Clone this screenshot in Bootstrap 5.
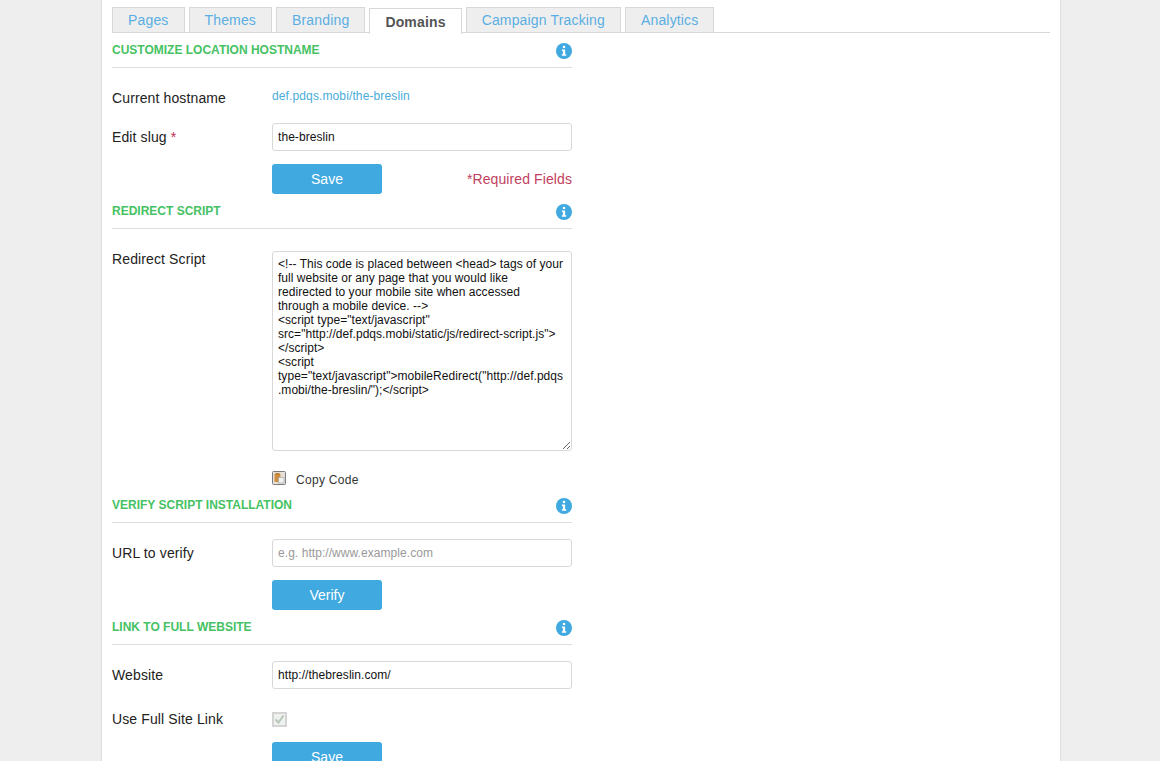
<!DOCTYPE html>
<html lang="en">
<head>
<meta charset="utf-8">
<title>Domains</title>
<link rel="stylesheet" href="https://cdn.jsdelivr.net/npm/bootstrap@5.3.0/dist/css/bootstrap.min.css">
<style>
html,body{height:761px;overflow:hidden}
body{background:#eee;font-family:"Liberation Sans",Arial,sans-serif;font-size:14px;color:#222}
.sheet{width:960px;height:761px;margin-left:101px;background:#fff;border:1px solid #ddd;border-width:0 1px;padding:7px 10px 0}
.tabbar{gap:4px;border-bottom:1px solid #d8d8d8;height:26px;flex-wrap:nowrap}
.tabbar .nav-link{height:25px;padding:0 15px;line-height:25px;font-size:14px;letter-spacing:.16px;color:#5aaee3;background:#eee;border:1px solid #d8d8d8;border-bottom:0;border-radius:0;margin:0}
.tabbar .nav-link.active{height:26px;padding-top:1px;margin-top:1px;font-weight:700;color:#555;background:#fff;border-color:#d8d8d8}
.formcol{width:460px}
.headbar{height:35px;border-bottom:1px solid #ddd;padding-top:10px}
.headbar h2{font-size:12px;line-height:15px;font-weight:700;color:#46c263;text-transform:uppercase;margin:0}
.tipicon{width:16px;height:16px;margin-top:0;display:block}
.fieldname{width:160px;flex:none;font-size:14px;letter-spacing:.12px;color:#222}
.fieldbody{width:300px}
.req{color:#c7254e}
.textbox.form-control{height:28px;padding:0 5px;font-size:12px;line-height:26px;letter-spacing:.06px;border:1px solid #d8d8d8;border-radius:3px;color:#111;background:#fff;box-shadow:none}
.textbox.form-control::placeholder{color:#999}
.codebox.form-control{height:200px;padding:5px;font-size:12px;line-height:14px;letter-spacing:.04px;border:1px solid #d8d8d8;border-radius:3px;color:#111;display:block;resize:vertical;white-space:pre;overflow:hidden}
.actbtn.btn{width:110px;height:30px;padding:0;font-size:14px;line-height:30px;color:#fff;background:#3fa9e0;border:0;border-radius:3px;display:block}
.hostlink{font-size:12px;letter-spacing:.12px;color:#48acd9;text-decoration:none;line-height:14px;display:block}
.reqnote{font-size:14px;letter-spacing:.1px;color:#c13f5f}
.row1{height:29px;margin-top:15px}
.row1 .fieldname{padding-top:5px}
.row1 .hostlink{padding-top:6px}
.row2{height:28px;margin-top:11px}
.row2 .fieldname{line-height:28px;margin:0}
.btnrow{margin-top:13px;height:30px}
.greycheck{width:15px;height:15px;display:block;margin-top:1px}
.script-row{margin-top:22px}
.script-row .fieldname{line-height:16px;padding-top:0}
.copyline{margin-top:20px;height:17px;align-items:flex-start}
.copyicon{display:block}
.copytxt{font-size:12px;color:#333;line-height:14px;margin:2px 0 0 10px;letter-spacing:.3px}
.field-top{margin-top:16px}
.field-top .fieldname{line-height:28px;margin:0}
.check-row{margin-top:22px;height:16px;line-height:16px}
.last-btn{margin-top:15px}
</style>
</head>
<body>
<div class="sheet">
  <ul class="nav nav-tabs tabbar">
    <li class="nav-item"><a class="nav-link" href="#">Pages</a></li>
    <li class="nav-item"><a class="nav-link" href="#">Themes</a></li>
    <li class="nav-item"><a class="nav-link" href="#">Branding</a></li>
    <li class="nav-item"><a class="nav-link active" href="#">Domains</a></li>
    <li class="nav-item"><a class="nav-link" href="#">Campaign Tracking</a></li>
    <li class="nav-item"><a class="nav-link" href="#">Analytics</a></li>
  </ul>
  <div class="formcol">
    <section>
      <div class="headbar d-flex justify-content-between">
        <h2>Customize Location Hostname</h2>
        <svg class="tipicon" viewBox="0 0 17 17"><circle cx="8.5" cy="8.5" r="8.5" fill="#3fa9e0"/><rect x="7.3" y="3" width="2.4" height="2.4" fill="#fff"/><path d="M6.2 7h3.5v5h1.2v1.5H6.2V12h1.1V8.5H6.2z" fill="#fff"/></svg>
      </div>
      <div class="d-flex row1">
        <div class="fieldname">Current hostname</div>
        <div class="fieldbody"><a class="hostlink" href="#">def.pdqs.mobi/the-breslin</a></div>
      </div>
      <div class="d-flex row2">
        <label class="fieldname" for="slug">Edit slug <span class="req">*</span></label>
        <div class="fieldbody"><input id="slug" class="form-control textbox" value="the-breslin"></div>
      </div>
      <div class="d-flex btnrow">
        <div class="fieldname"></div>
        <div class="fieldbody d-flex justify-content-between align-items-center">
          <button class="btn actbtn" type="button">Save</button>
          <span class="reqnote">*Required Fields</span>
        </div>
      </div>
    </section>
    <section>
      <div class="headbar d-flex justify-content-between">
        <h2>Redirect Script</h2>
        <svg class="tipicon" viewBox="0 0 17 17"><circle cx="8.5" cy="8.5" r="8.5" fill="#3fa9e0"/><rect x="7.3" y="3" width="2.4" height="2.4" fill="#fff"/><path d="M6.2 7h3.5v5h1.2v1.5H6.2V12h1.1V8.5H6.2z" fill="#fff"/></svg>
      </div>
      <div class="d-flex script-row">
        <label class="fieldname" for="code">Redirect Script</label>
        <div class="fieldbody">
          <textarea id="code" class="form-control codebox" wrap="off" spellcheck="false">&lt;!-- This code is placed between &lt;head&gt; tags of your
full website or any page that you would like
redirected to your mobile site when accessed
through a mobile device. --&gt;
&lt;script type="text/javascript"
src="http://def.pdqs.mobi/static/js/redirect-script.js"&gt;
&lt;/script&gt;
&lt;script
type="text/javascript"&gt;mobileRedirect("http://def.pdqs
.mobi/the-breslin/");&lt;/script&gt;</textarea>
          <div class="d-flex copyline">
            <svg class="copyicon" viewBox="0 0 14 14" width="14" height="14"><rect x=".5" y=".5" width="13" height="13" rx="1" fill="#e6e2da" stroke="#7c7c7c"/><path d="M2.5 3h1V2h4v1h1v8h-6z" fill="#d08f3e"/><rect x="3.5" y="2.5" width="4" height="1" fill="#a87432"/><rect x="6.5" y="6.5" width="5.5" height="5.5" fill="#f1f1f1" stroke="#a8a8a8" stroke-width=".7"/></svg>
            <span class="copytxt">Copy Code</span>
          </div>
        </div>
      </div>
    </section>
    <section>
      <div class="headbar d-flex justify-content-between">
        <h2>Verify Script Installation</h2>
        <svg class="tipicon" viewBox="0 0 17 17"><circle cx="8.5" cy="8.5" r="8.5" fill="#3fa9e0"/><rect x="7.3" y="3" width="2.4" height="2.4" fill="#fff"/><path d="M6.2 7h3.5v5h1.2v1.5H6.2V12h1.1V8.5H6.2z" fill="#fff"/></svg>
      </div>
      <div class="d-flex field-top">
        <label class="fieldname" for="verify">URL to verify</label>
        <div class="fieldbody"><input id="verify" class="form-control textbox" placeholder="e.g. http://www.example.com"></div>
      </div>
      <div class="d-flex btnrow">
        <div class="fieldname"></div>
        <div class="fieldbody"><button class="btn actbtn" type="button">Verify</button></div>
      </div>
    </section>
    <section>
      <div class="headbar d-flex justify-content-between">
        <h2>Link to Full Website</h2>
        <svg class="tipicon" viewBox="0 0 17 17"><circle cx="8.5" cy="8.5" r="8.5" fill="#3fa9e0"/><rect x="7.3" y="3" width="2.4" height="2.4" fill="#fff"/><path d="M6.2 7h3.5v5h1.2v1.5H6.2V12h1.1V8.5H6.2z" fill="#fff"/></svg>
      </div>
      <div class="d-flex field-top">
        <label class="fieldname" for="site">Website</label>
        <div class="fieldbody"><input id="site" class="form-control textbox" value="http://thebreslin.com/"></div>
      </div>
      <div class="d-flex check-row">
        <div class="fieldname">Use Full Site Link</div>
        <div class="fieldbody"><svg class="greycheck" viewBox="0 0 15 15"><rect x="1" y="1" width="13" height="13" fill="#eef2ee" stroke="#d4d4d4" stroke-width="2"/><path d="M3.5 7.5l3 3 5-7" fill="none" stroke="#b8c4b8" stroke-width="2"/></svg></div>
      </div>
      <div class="d-flex last-btn">
        <div class="fieldname"></div>
        <div class="fieldbody"><button class="btn actbtn" type="button">Save</button></div>
      </div>
    </section>
  </div>
</div>
</body>
</html>
